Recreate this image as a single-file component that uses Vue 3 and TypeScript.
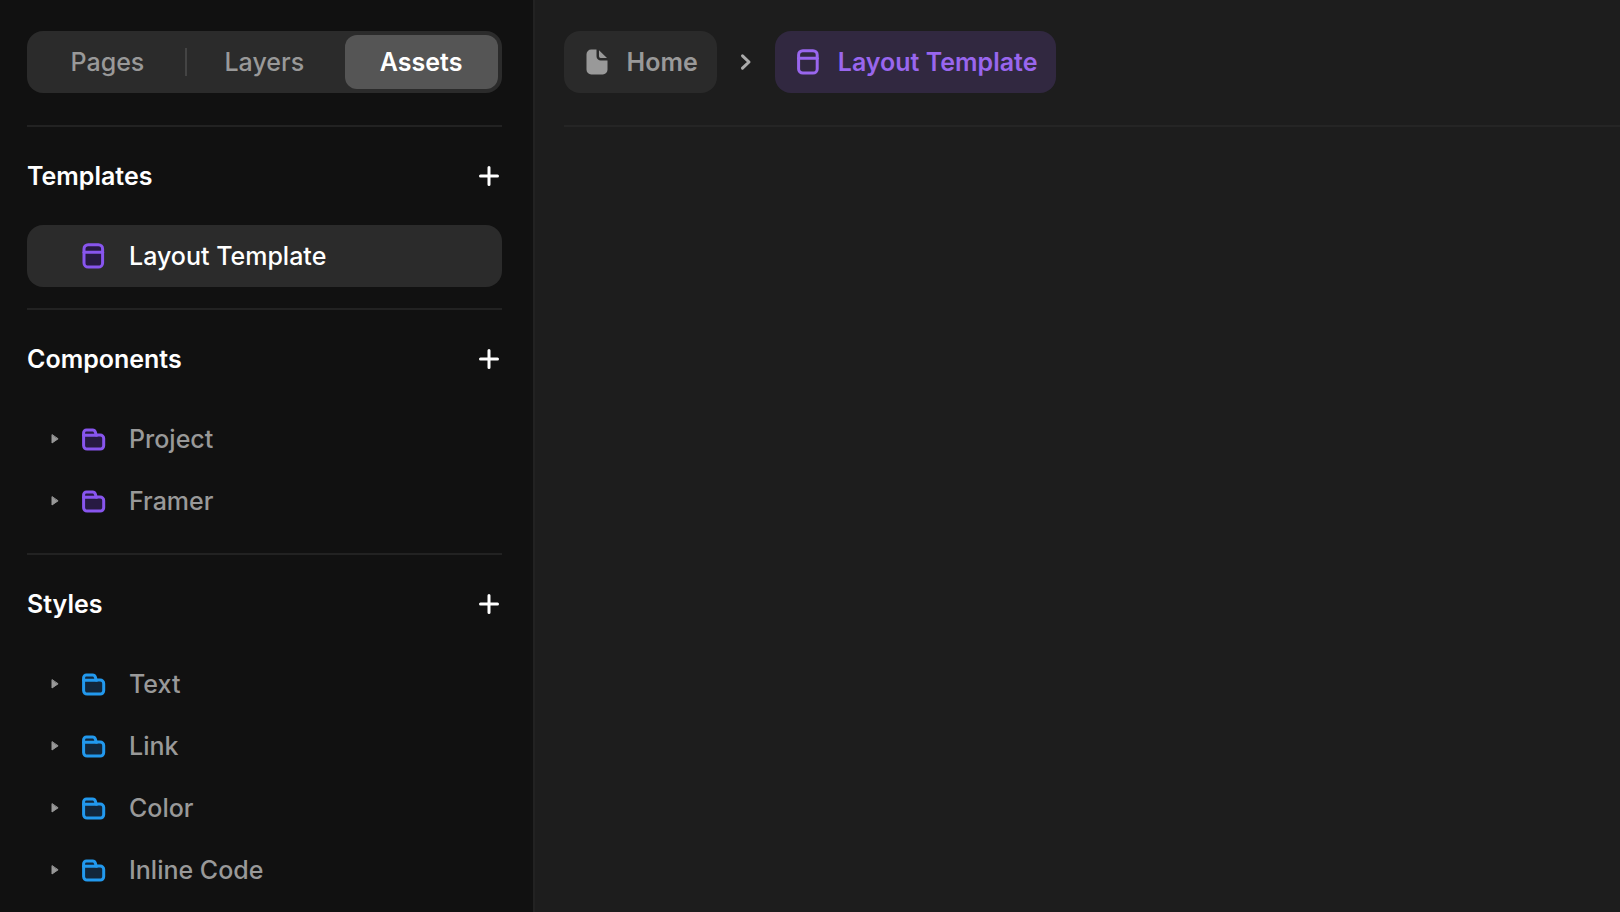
<script setup lang="ts">
import { ref } from 'vue'

interface Section {
  title: string
  tone: 'violet' | 'blue'
  folders: string[]
}

const tabs: string[] = ['Pages', 'Layers', 'Assets']
const activeTab = ref<string>('Assets')

const sections: Section[] = [
  { title: 'Templates', tone: 'violet', folders: [] },
  { title: 'Components', tone: 'violet', folders: ['Project', 'Framer'] },
  { title: 'Styles', tone: 'blue', folders: ['Text', 'Link', 'Color', 'Inline Code'] },
]
</script>

<template>
  <div class="app">
    <aside class="sidebar">
      <div class="tabs" role="tablist">
        <button
          v-for="tab in tabs"
          :key="tab"
          type="button"
          role="tab"
          class="tab"
          :class="{ active: tab === activeTab }"
          :aria-selected="tab === activeTab"
          @click="activeTab = tab"
        >
          {{ tab }}
        </button>
      </div>

      <section v-for="section in sections" :key="section.title" class="section">
        <header class="section-head">
          <h2>{{ section.title }}</h2>
          <button type="button" class="add" :aria-label="'Add to ' + section.title">
            <svg width="20" height="20" viewBox="0 0 20 20" aria-hidden="true">
              <path d="M10 1.5v17M1.5 10h17" />
            </svg>
          </button>
        </header>

        <button v-if="section.folders.length === 0" type="button" class="row selected">
          <span class="arrow"></span>
          <svg class="icon violet" width="24" height="26" viewBox="0 0 24 26" aria-hidden="true">
            <rect x="2" y="1.7" width="18.600" height="22.400" rx="4.200" />
            <path d="M2 9.300h18.600" />
          </svg>
          <span>Layout Template</span>
        </button>

        <button v-for="folder in section.folders" :key="folder" type="button" class="row">
          <svg class="arrow" width="8" height="10" viewBox="0 0 8 10" aria-hidden="true">
            <path d="M1 1v8L6.800 5z" />
          </svg>
          <svg class="icon" :class="section.tone" width="24" height="26" viewBox="0 0 24 26" aria-hidden="true">
            <path d="M1.600 9V6.800A2.800 2.800 0 0 1 4.400 4H10.600A2.800 2.800 0 0 1 13.300 6L14.200 9H18.200A3.500 3.500 0 0 1 21.700 12.500V19.600A3.500 3.500 0 0 1 18.200 23.100H5.100A3.500 3.500 0 0 1 1.600 19.600z" />
            <path d="M1.600 9.200h13" />
          </svg>
          <span>{{ folder }}</span>
        </button>
      </section>
    </aside>

    <main class="canvas">
      <nav class="crumbs" aria-label="Breadcrumb">
        <a href="#" class="crumb">
          <svg width="22" height="26" viewBox="0 0 22 26" aria-hidden="true">
            <path
              class="solid"
              d="M5.200 .5H10.500V7.200A4.300 4.300 0 0 0 14.800 11.500H21.500V20.800A4.700 4.700 0 0 1 16.800 25.500H5.200A4.700 4.700 0 0 1 .5 20.800V5.200A4.700 4.700 0 0 1 5.200 .5z"
            />
            <path class="solid" d="M13 1.200L21 8.900H14.600A1.600 1.600 0 0 1 13 7.300z" />
          </svg>
          Home
        </a>
        <svg class="chevron" width="12" height="18" viewBox="0 0 12 18" aria-hidden="true">
          <path d="M2.500 2.800L9 9L2.500 15.200" />
        </svg>
        <a href="#" class="crumb current" aria-current="page">
          <svg width="22" height="26" viewBox="0 0 22 26" aria-hidden="true">
            <rect x="1.600" y="1.700" width="18.600" height="22.400" rx="4.200" />
            <path d="M1.600 9.300h18.600" />
          </svg>
          Layout Template
        </a>
      </nav>
    </main>
  </div>
</template>

<style>
html,
body {
  margin: 0;
  background: #1d1d1d;
}
</style>

<style scoped>
.app {
  display: flex;
  min-height: 100vh;
  box-sizing: border-box;
  font-family: Inter, 'Liberation Sans', sans-serif;
  font-size: 25px;
  font-weight: 500;
  line-height: 30px;
  color: #999;
  background: #1d1d1d;
}

button {
  font: inherit;
  color: inherit;
  margin: 0;
  padding: 0;
  border: 0;
  background: none;
  cursor: pointer;
}

svg {
  flex: none;
  fill: none;
  stroke: currentColor;
  stroke-width: 3;
  stroke-linecap: round;
  stroke-linejoin: round;
}

.sidebar {
  flex: none;
  width: 33%;
  box-sizing: border-box;
  padding: 31px 31px 0 27px;
  background: #111;
  border-right: 2px solid #222;
}

.tabs {
  display: grid;
  grid-template-columns: repeat(3, 1fr);
  gap: 4px;
  height: 62px;
  box-sizing: border-box;
  padding: 4px;
  margin-bottom: 32px;
  border-radius: 16px;
  background: #2b2b2b;
}

.tab {
  position: relative;
  border-radius: 12px;
}

.tab:first-child::after {
  content: '';
  position: absolute;
  top: 13px;
  bottom: 13px;
  right: -3px;
  width: 2px;
  background: #444;
}

.tab.active {
  color: #fff;
  font-weight: 600;
  background: #555;
}

.section {
  border-top: 2px solid #222;
  padding-bottom: 21px;
}

.section-head {
  display: flex;
  align-items: center;
  justify-content: space-between;
  height: 98px;
  color: #fff;
}

.section-head h2 {
  margin: 0;
  font-size: 25px;
  font-weight: 600;
}

.add {
  display: flex;
  padding: 4px 3px;
}

.row {
  display: flex;
  align-items: center;
  width: 100%;
  height: 62px;
  padding-left: 24px;
  border-radius: 16px;
  text-align: left;
}

.row.selected {
  color: #fff;
  background: #2b2b2b;
}

.arrow {
  width: 8px;
  margin-right: 23px;
  fill: currentColor;
  stroke-width: 1;
}

.icon {
  margin-right: 23px;
}

.violet {
  color: #8855ee;
  fill: #271a42;
}

.blue {
  color: #2299ee;
  fill: #12263a;
}

.canvas {
  flex: 1;
  min-width: 0;
  padding: 31px 0 0 29px;
}

.crumbs {
  display: flex;
  align-items: center;
  padding-bottom: 32px;
  border-bottom: 2px solid #252525;
}

.crumb {
  display: flex;
  align-items: center;
  gap: 19px;
  height: 62px;
  box-sizing: border-box;
  padding: 0 19px 0 22px;
  border-radius: 16px;
  color: #999;
  font-weight: 600;
  text-decoration: none;
  background: #2a2a2a;
}

.crumb.current {
  color: #9966ee;
  background: #312840;
}

.solid {
  fill: currentColor;
  stroke: none;
}

.chevron {
  margin: 0 23px;
  color: #aaa;
}
</style>
